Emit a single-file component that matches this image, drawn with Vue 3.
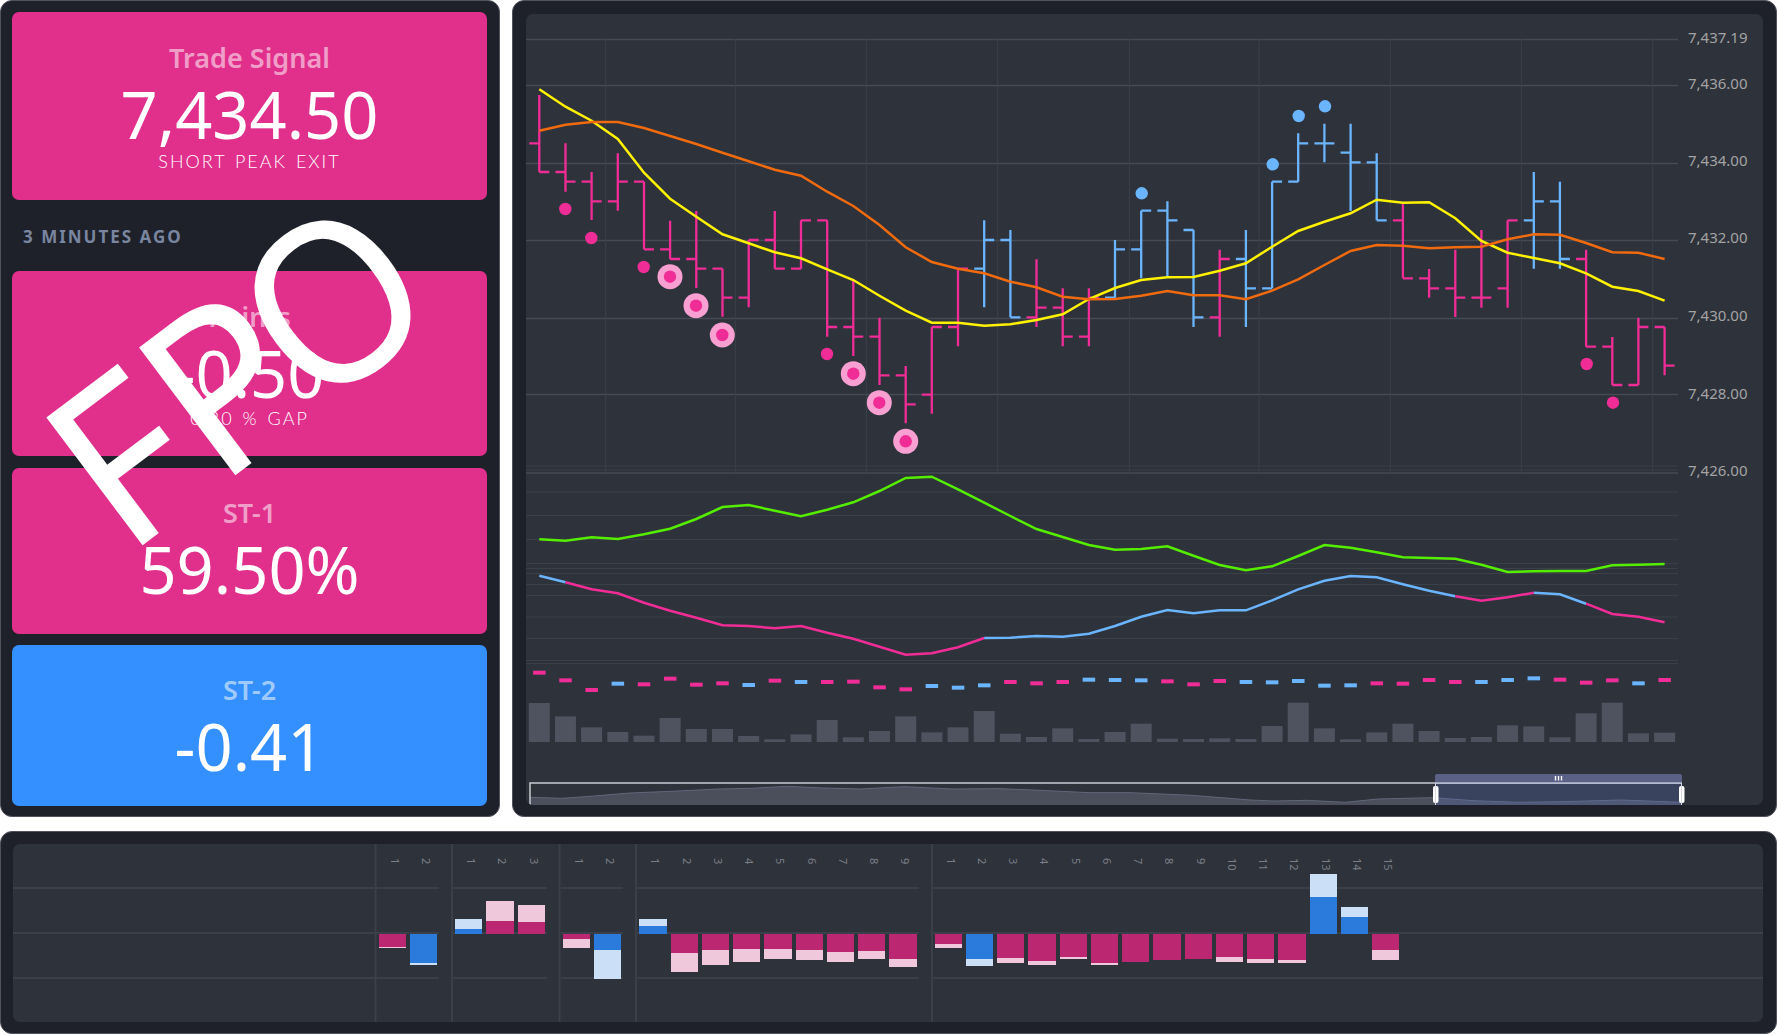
<template>
  <div class="page">
    <div class="panel side">
      <div class="card pink first">
        <div class="label">Trade Signal</div>
        <div class="value">7,434.50</div>
        <div class="sub">SHORT PEAK EXIT</div>
      </div>
      <div class="ago">3 MINUTES AGO</div>
      <div class="card pink second">
        <div class="label">Points</div>
        <div class="value">-0.50</div>
        <div class="sub">0.30 % GAP</div>
      </div>
      <div class="card pink third">
        <div class="label">ST-1</div>
        <div class="value">59.50%</div>
      </div>
      <div class="card blue fourth">
        <div class="label">ST-2</div>
        <div class="value">-0.41</div>
      </div>
    </div>

    <div class="panel main">
      <div class="inner">
        <svg class="chart" width="1236" height="791" viewBox="526 14 1236 791">
          <!-- price grid -->
          <line v-for="y in priceGrid" :key="'h' + y" x1="526" x2="1678" :y1="y" :y2="y" class="grid" />
          <line v-for="x in priceVert" :key="'v' + x" :x1="x" :x2="x" y1="39" y2="473" class="grid faint" />
          <line v-for="y in lowerGrid" :key="'l' + y" x1="526" x2="1678" :y1="y" :y2="y" class="grid faint" />
          <text v-for="t in axis" :key="t.label" x="1688" :y="t.y" class="axis">{{ t.label }}</text>

          <!-- ohlc -->
          <path v-for="(b, i) in bars" :key="'b' + i" :d="barPath(b, i)" fill="none" stroke-width="2.3" :stroke="b[4] === 'b' ? BLUE : PINK" />
          <polyline :points="linePoints(yellow)" class="line" stroke="#fff200" />
          <polyline :points="linePoints(orange)" class="line" stroke="#f06a0f" />

          <!-- markers -->
          <circle v-for="d in smallDots" :key="'s' + d[0]" :cx="d[0]" :cy="d[1]" r="6.2" :fill="PINK" />
          <circle v-for="d in blueDots" :key="'d' + d[0]" :cx="d[0]" :cy="d[1]" r="6.2" :fill="BLUE" />
          <g v-for="d in bigDots" :key="'r' + d[0]">
            <circle :cx="d[0]" :cy="d[1]" r="12.5" fill="#f8a0d2" />
            <circle :cx="d[0]" :cy="d[1]" r="6.2" :fill="PINK" />
          </g>

          <!-- lower study -->
          <polyline :points="lowerPoints(green, 0, 43)" class="line" stroke="#55ee00" />
          <polyline
            v-for="s in segments" :key="'g' + s[0]"
            :points="lowerPoints(signal, s[0], s[1])" class="line" :stroke="s[2] === 'b' ? BLUE : PINK"
          />
          <rect
            v-for="(d, i) in dashes" :key="'t' + i"
            :x="xAt(i) - 6.2" :y="470 + d[0] / 3 - 2" width="12.5" height="4"
            :fill="d[1] === 'b' ? BLUE : PINK"
          />
          <rect
            v-for="(v, i) in volume" :key="'w' + i"
            :x="xAt(i) - 10.5" :y="470 + v / 3" width="21" :height="742 - (470 + v / 3)" fill="#4f525f"
          />

          <!-- range slider -->
          <path :d="areaPath" fill="#4b4e5b" stroke="none" />
          <polyline :points="areaLine" fill="none" stroke="#62667a" stroke-width="1" />
          <rect x="1435" y="783" width="247" height="22" fill="#5b78c8" opacity=".25" />
          <path d="M530 805V783H1682" fill="none" stroke="#c9ccd3" stroke-width="1.5" />
          <path d="M1435 783V776a2 2 0 0 1 2-2H1680a2 2 0 0 1 2 2V783Z" fill="#5a6184" />
          <path d="M1435 783H1682" stroke="#b9c0d6" stroke-width="1.5" />
          <path d="M1555.5 776v4.4M1558.5 776v4.4M1561.5 776v4.4" stroke="#fff" stroke-width="1.4" />
          <rect x="1433" y="786" width="5.5" height="17" rx="2" fill="#fff" />
          <rect x="1679" y="786" width="5.5" height="17" rx="2" fill="#fff" />
          <path d="M1435.5 783v22M1681.5 783v22" stroke="#d5d8e0" stroke-width="1" />
        </svg>
      </div>
    </div>

    <div class="panel bottom">
      <div class="inner">
        <svg class="chart" width="1750" height="178" viewBox="13 844 1750 178">
          <g v-for="(s, i) in hSpans" :key="'sp' + i">
            <line v-for="y in [888, 933, 978]" :key="y" :x1="s[0]" :x2="s[1]" :y1="y" :y2="y" class="rule" />
          </g>
          <line v-for="x in dividers" :key="x" :x1="x" :x2="x" y1="844" y2="1022" class="rule" />
          <g v-for="(g, gi) in groups" :key="'grp' + gi">
            <g v-for="(b, i) in g" :key="i">
              <rect :x="b[0]" :y="Math.min(934, b[2])" :width="b[1] - b[0]" :height="Math.abs(b[2] - 934)" :fill="b[4] === 'b' ? '#2a7bdb' : '#bc2772'" />
              <rect
                :x="b[0]"
                :y="Math.min(b[2], b[3])" :width="b[1] - b[0]" :height="Math.abs(b[3] - b[2])"
                :fill="b[4] === 'b' ? '#cbdff6' : '#efc8db'"
              />
              <text class="tick" :transform="`translate(${(b[0] + b[1]) / 2 + 2} 858) rotate(90)`" dy="4">{{ i + 1 }}</text>
            </g>
          </g>
        </svg>
      </div>
    </div>

    <div class="fpo">F<span class="fpo-p">P</span><span class="fpo-o">O</span></div>
  </div>
</template>

<script setup>
const PINK = '#f02d96'
const BLUE = '#6bb5ff'

const xAt = (i) => 539.3 + i * 26.17

const priceGrid = [39.5, 85.5, 163.5, 240.5, 318.5, 394.5, 473]
const priceVert = [605.7, 735.3, 866.3, 997.7, 1129.3, 1259, 1390.3, 1521.3, 1652.7]
const lowerGrid = [466, 470, 492, 515.5, 539.5, 563.5, 568.5, 573.5, 584.5, 595.5, 617, 638.5, 660.5, 663.5]

const axis = [
  { label: '7,437.19', y: 42.7 },
  { label: '7,436.00', y: 88.7 },
  { label: '7,434.00', y: 165.7 },
  { label: '7,432.00', y: 243.3 },
  { label: '7,430.00', y: 321 },
  { label: '7,428.00', y: 398.7 },
  { label: '7,426.00', y: 476 },
]

// high, low, open, close (measured at 3x), side
const bars = [
  [285, 516, 430, 516], [430, 575, 516, 545], [516, 660, 545, 604], [460, 632, 604, 545],
  [545, 748, 545, 748], [662, 777, 748, 777], [633, 864, 777, 806], [806, 950, 806, 893],
  [720, 922, 893, 720], [633, 806, 720, 806], [661, 806, 806, 661], [661, 1010, 661, 981],
  [840, 1068, 981, 1010], [953, 1155, 1010, 1126], [1098, 1270, 1126, 1213], [981, 1241, 1184, 981],
  [806, 1039, 981, 806], [661, 922, 806, 720, 'b'], [690, 952, 720, 952, 'b'], [778, 981, 952, 923],
  [865, 1039, 923, 1010], [865, 1039, 1010, 893], [720, 893, 893, 748, 'b'], [632, 835, 748, 632, 'b'],
  [604, 830, 632, 661, 'b'], [690, 981, 690, 952, 'b'], [749, 1010, 952, 777], [690, 981, 777, 865, 'b'],
  [545, 865, 865, 545, 'b'], [400, 545, 545, 430, 'b'], [371, 487, 430, 430, 'b'], [371, 633, 458, 487, 'b'],
  [460, 661, 487, 661, 'b'], [610, 835, 661, 835], [807, 893, 835, 865], [749, 951, 865, 893],
  [690, 923, 893, 893], [661, 923, 865, 661], [516, 806, 661, 604, 'b'], [545, 806, 604, 777, 'b'],
  [749, 1040, 777, 1040], [1011, 1155, 1040, 1155], [953, 1155, 1155, 981], [981, 1126, 981, 1097],
]

function barPath(b, i) {
  const x = xAt(i).toFixed(1)
  const y = (v) => (v / 3).toFixed(1)
  return `M${x} ${y(b[0])}V${y(b[1])}M${x - 10} ${y(b[2])}H${x}M${x} ${y(b[3])}H${+x + 10}`
}

const yellow = [268, 320, 362, 417, 518, 596, 650, 703, 730, 757, 775, 808, 840, 887, 932, 968, 968, 977, 973, 960, 943, 897, 864, 840, 832, 831, 812, 790, 740, 693, 665, 640, 599, 608, 607, 655, 723, 758, 774, 790, 820, 860, 873, 902]
const orange = [392, 374, 366, 366, 384, 408, 432, 458, 484, 509, 527, 575, 618, 675, 742, 786, 806, 820, 845, 862, 890, 898, 897, 887, 873, 886, 886, 898, 872, 838, 795, 753, 735, 737, 745, 742, 740, 718, 703, 704, 729, 757, 758, 777]
const linePoints = (arr) => arr.map((v, i) => `${xAt(i).toFixed(1)},${(v / 3).toFixed(1)}`).join(' ')

const green = [208, 212, 202, 207, 193, 176, 147, 111, 105, 122, 139, 119, 97, 63, 24, 20, 58, 98, 138, 177, 201, 225, 239, 237, 229, 257, 285, 301, 289, 258, 225, 233, 247, 262, 264, 266, 284, 306, 304, 303, 303, 286, 284, 282]
const signal = [317, 337, 358, 370, 398, 422, 443, 466, 468, 475, 468, 488, 506, 530, 554, 550, 532, 504, 503, 498, 500, 491, 468, 440, 420, 430, 421, 421, 391, 358, 332, 318, 322, 343, 362, 379, 392, 382, 368, 373, 401, 432, 440, 457]
const segments = [[0, 1, 'b'], [1, 17, 'p'], [17, 35, 'b'], [35, 38, 'p'], [38, 40, 'b'], [40, 43, 'p']]
const lowerPoints = (arr, from, to) => {
  const out = []
  for (let i = from; i <= to; i++) out.push(`${xAt(i).toFixed(1)},${(470 + arr[i] / 3).toFixed(1)}`)
  return out.join(' ')
}

const dashes = [
  [608], [631], [660], [641, 'b'], [643], [626], [644], [640], [645, 'b'], [632], [636, 'b'],
  [636], [635], [652], [658], [648, 'b'], [653, 'b'], [646, 'b'], [636], [640], [636], [629, 'b'],
  [630, 'b'], [631, 'b'], [634], [643], [633], [636, 'b'], [637, 'b'], [633, 'b'], [647, 'b'], [646, 'b'],
  [640], [641], [630], [636], [636, 'b'], [630, 'b'], [625, 'b'], [629], [638], [631], [640, 'b'], [630],
]
const volume = [699, 739, 772, 786, 797, 744, 777, 777, 798, 808, 793, 750, 802, 783, 739, 787, 772, 723, 791, 801, 775, 807, 786, 761, 806, 807, 805, 807, 768, 698, 775, 808, 787, 761, 783, 804, 801, 766, 769, 802, 730, 698, 790, 788]

const smallDots = [[565.3, 209], [591.3, 238], [643.7, 267], [827, 354], [1586.7, 364], [1613, 402.7]]
const bigDots = [[670, 276.7], [696, 305.7], [722.3, 335], [853.3, 373.7], [879.3, 402.7], [905.7, 441.3]]
const blueDots = [[1141.7, 193.3], [1272.7, 164.3], [1298.7, 116], [1325, 106.3]]

const sliderPts = [
  [530, 982], [562, 985], [590, 979], [630, 969], [671, 964], [719, 957], [751, 955], [787, 949], [823, 954], [860, 957],
  [904, 950], [952, 957], [1000, 956], [1040, 961], [1089, 968], [1130, 968], [1192, 976], [1250, 990], [1274, 993],
  [1307, 991], [1345, 997], [1378, 987], [1433, 983], [1473, 992], [1518, 997], [1563, 995], [1621, 990], [1682, 997],
].map((p) => [p[0], 470 + p[1] / 3])
const areaLine = sliderPts.map((p) => p.join(',')).join(' ')
const areaPath = `M530 805L${sliderPts.map((p) => p.join(' ')).join('L')}L1682 805Z`

const hSpans = [[13, 439], [453, 547], [561, 623], [637, 919], [933, 1763]]
const dividers = [375.5, 452, 559.5, 636, 932]

// x0, x1, dark end, light end, side
const groups = [
  [[379, 406, 947, 948], [410, 437, 963, 965, 'b']],
  [[455, 482, 929, 919, 'b'], [486, 514, 921, 901], [518, 545, 922, 905]],
  [[563, 590, 939, 948], [594, 621, 950, 979, 'b']],
  [
    [639, 667, 926, 919, 'b'], [671, 698, 953, 972], [702, 729, 950, 965], [733, 760, 949, 962], [764, 792, 949, 959],
    [796, 823, 950, 960], [827, 854, 952, 962], [858, 885, 951, 959], [889, 917, 959, 967],
  ],
  [
    [935, 962, 944, 948], [966, 993, 959, 966, 'b'], [997, 1024, 958, 963], [1028, 1056, 961, 965], [1060, 1087, 957, 959],
    [1091, 1118, 963, 965], [1122, 1149, 962, 962], [1153, 1181, 960, 960], [1185, 1212, 959, 959], [1216, 1243, 957, 962],
    [1247, 1274, 959, 963], [1278, 1306, 960, 963], [1310, 1337, 897, 874, 'b'], [1341, 1368, 917, 907, 'b'], [1372, 1399, 950, 960],
  ],
]
</script>

<style>
html, body { margin: 0; background: #fff; }
</style>

<style scoped>
.page {
  position: relative;
  width: 1777px;
  height: 1035px;
  display: grid;
  grid-template-columns: 500px 1265px;
  grid-template-rows: 817px 203px;
  column-gap: 12px;
  row-gap: 14px;
  overflow: hidden;
  font-family: "Noto Sans", sans-serif;
}
.panel {
  box-sizing: border-box;
  background: #1e2129;
  border: 1px solid #50535b;
  border-radius: 12px;
}
.side {
  display: flex;
  flex-direction: column;
  padding: 11px 12px 10px 11px;
}
.main { padding: 13px 13px 11px 13px; }
.bottom { grid-column: 1 / 3; padding: 12px 13px 11px 12px; }
.inner {
  height: 100%;
  background: #2e323b;
  border-radius: 7px;
  overflow: hidden;
}
.chart { display: block; }

.card {
  box-sizing: border-box;
  border-radius: 7px;
  padding-top: 32px;
  text-align: center;
  color: #fff;
}
.pink { background: #e12f8c; }
.blue { background: #348fff; }
.first { height: 188px; }
.second { height: 185px; margin-bottom: 12px; }
.third { height: 166px; margin-bottom: 11px; padding-top: 31px; }
.fourth { height: 161px; padding-top: 31px; }
.label {
  font-weight: 600;
  font-size: 27px;
  line-height: 28px;
  color: rgba(255, 255, 255, 0.55);
}
.value {
  font-size: 65px;
  line-height: 64px;
  margin-top: 10px;
}
.sub {
  font-family: Lato, sans-serif;
  font-weight: 300;
  font-size: 18px;
  line-height: 20px;
  letter-spacing: 2px;
  word-spacing: 2px;
  margin-top: 5px;
}
.second .sub { margin-top: 3px; }
.ago {
  height: 71px;
  line-height: 73px;
  padding-left: 11px;
  font-size: 17px;
  font-weight: 700;
  letter-spacing: 2px;
  color: #7a86a0;
}

.grid { stroke: #464a53; stroke-width: 1.3; }
.grid.faint { stroke: #3b3f48; stroke-width: 1; }
.axis { font-size: 15px; fill: #a3a3a3; }
.line { fill: none; stroke-width: 2.5; }
.rule { stroke: #3b3f4a; stroke-width: 2; }
.tick { font-size: 11px; fill: #7c7f87; }

.fpo {
  position: absolute;
  left: 6px;
  top: 400px;
  font-size: 224px;
  line-height: 224px;
  color: #fff;
  white-space: nowrap;
  transform: rotate(-37deg);
  transform-origin: 0 0;
  pointer-events: none;
}
.fpo-p { letter-spacing: -15px; }
.fpo-o {
  display: inline-block;
  transform: scaleX(0.95);
  transform-origin: 0 50%;
}
</style>
